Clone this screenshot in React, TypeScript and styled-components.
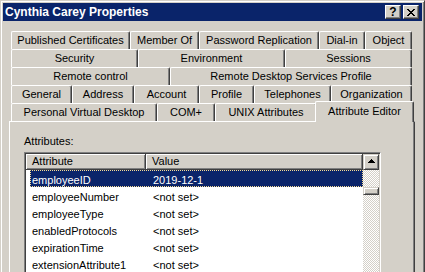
import React from 'react';
import styled, { createGlobalStyle, css } from 'styled-components';

const tabRows: { label: string; w: number; active?: boolean }[][] = [
  [
    { label: 'Published Certificates', w: 119 },
    { label: 'Member Of', w: 69 },
    { label: 'Password Replication', w: 120 },
    { label: 'Dial-in', w: 46 },
    { label: 'Object', w: 47 },
  ],
  [
    { label: 'Security', w: 127 },
    { label: 'Environment', w: 147 },
    { label: 'Sessions', w: 127 },
  ],
  [
    { label: 'Remote control', w: 159 },
    { label: 'Remote Desktop Services Profile', w: 242 },
  ],
  [
    { label: 'General', w: 61 },
    { label: 'Address', w: 62 },
    { label: 'Account', w: 65 },
    { label: 'Profile', w: 55 },
    { label: 'Telephones', w: 77 },
    { label: 'Organization', w: 81 },
  ],
  [
    { label: 'Personal Virtual Desktop', w: 146 },
    { label: 'COM+', w: 58 },
    { label: 'UNIX Attributes', w: 102 },
    { label: 'Attribute Editor', w: 95, active: true },
  ],
];

const attributes = [
  { name: 'employeeID', value: '2019-12-1', selected: true },
  { name: 'employeeNumber', value: '<not set>' },
  { name: 'employeeType', value: '<not set>' },
  { name: 'enabledProtocols', value: '<not set>' },
  { name: 'expirationTime', value: '<not set>' },
  { name: 'extensionAttribute1', value: '<not set>' },
];

const App = () => {
  return (
    <>
      <GlobalStyle />
      <Window>
        <TitleBar>
          <Title>Cynthia Carey Properties</Title>
          <CaptionButtons>
            <CaptionButton>?</CaptionButton>
            <CaptionButton>
              <svg width="8" height="7" viewBox="0 0 8 7" shapeRendering="crispEdges">
                <path
                  d="M0 0h2v1h1v1h2V1h1V0h2v1H7v1H6v1H5v1h1v1h1v1h1v1H6V6H5V5H3v1H2v1H0V6h1V5h1V4h1V3H2V2H1V1H0z"
                  fill="#000"
                />
              </svg>
            </CaptionButton>
          </CaptionButtons>
        </TitleBar>

        <TabStrip>
          {tabRows.map((row, i) => (
            <TabRow key={i}>
              {row.map((tab) => (
                <Tab key={tab.label} $w={tab.w} $active={tab.active}>
                  {tab.label}
                </Tab>
              ))}
            </TabRow>
          ))}
        </TabStrip>

        <Panel>
          <FieldLabel>Attributes:</FieldLabel>
          <ListFrame>
            <ListBody>
              <HeaderRow>
                <HeaderCell $w={120}>Attribute</HeaderCell>
                <HeaderCell $w={217}>Value</HeaderCell>
              </HeaderRow>
              {attributes.map((a) => (
                <Row key={a.name} $selected={a.selected}>
                  <NameCell>{a.name}</NameCell>
                  <ValueCell>{a.value}</ValueCell>
                </Row>
              ))}
            </ListBody>
            <ScrollBar>
              <ScrollButton>
                <svg width="7" height="4" viewBox="0 0 7 4" shapeRendering="crispEdges">
                  <path d="M3 0h1v1h1v1h1v1h1v1H0V3h1V2h1V1h1z" fill="#000" />
                </svg>
              </ScrollButton>
              <Track $h={17} />
              <Thumb />
              <Track />
            </ScrollBar>
          </ListFrame>
        </Panel>
      </Window>
    </>
  );
};
export default App;

const GlobalStyle = createGlobalStyle`
  html, body {
    margin: 0;
    padding: 0;
    overflow: hidden;
    background: #d4d0c8;
  }

  body {
    font-family: 'Liberation Sans', Arial, sans-serif;
    font-size: 11px;
    color: #000;
  }
`;

const Window = styled.div`
  box-sizing: border-box;
  width: 425px;
  height: 272px;
  overflow: hidden;
  padding: 2px 2px 0 2px;

  background: #d4d0c8;
  border-top: 1px solid #d4d0c8;
  border-left: 1px solid #d4d0c8;
  border-right: 1px solid #404040;
  box-shadow: inset 1px 1px 0 #fff, inset -1px 0 0 #808080;
`;

const TitleBar = styled.div`
  display: flex;
  height: 18px;
  padding: 0 3px 0 2px;

  align-items: center;
  background: #0a246a;
`;

const Title = styled.div`
  color: #fff;
  font-size: 12px;
  font-weight: bold;
  white-space: nowrap;
`;

const CaptionButtons = styled.div`
  display: flex;
  margin-left: auto;
  gap: 2px;
`;

const CaptionButton = styled.div`
  display: flex;
  box-sizing: border-box;
  width: 16px;
  height: 14px;

  align-items: center;
  justify-content: center;
  background: #d4d0c8;
  border: 1px solid;
  border-color: #fff #404040 #404040 #fff;
  box-shadow: inset -1px -1px 0 #808080;

  font-size: 12px;
  font-weight: bold;
  line-height: 12px;
`;

const TabStrip = styled.div`
  display: flex;
  margin: 10px 0 0 8px;

  flex-direction: column;
`;

const TabRow = styled.div`
  display: flex;
  width: 401px;
  height: 18px;

  align-items: flex-start;
`;

const Tab = styled.div<{ $w: number; $active?: boolean }>`
  box-sizing: border-box;
  width: ${(p) => p.$w}px;
  height: 18px;
  padding-top: 2px;
  flex: none;

  background: #d4d0c8;
  border-left: 1px solid #fff;
  border-top: 1px solid #fff;
  border-right: 1px solid #404040;
  border-radius: 2px 2px 0 0;
  box-shadow: inset -1px 0 0 #808080;

  text-align: center;
  line-height: 13px;
  white-space: nowrap;

  ${(p) =>
    p.$active &&
    css`
      position: relative;
      z-index: 1;
      width: ${p.$w + 4}px;
      height: 21px;
      margin: -2px -2px 0;
      padding-top: 3px;
    `}
`;

const Panel = styled.div`
  box-sizing: border-box;
  width: 406px;
  height: 170px;
  margin-left: 6px;
  padding: 13px 0 0 14px;

  background: #d4d0c8;
  border-left: 1px solid #fff;
  border-top: 1px solid #fff;
  border-right: 1px solid #404040;
  box-shadow: inset -1px 0 0 #808080;
`;

const FieldLabel = styled.div`
  margin-bottom: 4px;
  line-height: 13px;
`;

const ListFrame = styled.div`
  display: flex;
  box-sizing: border-box;
  width: 357px;
  height: 150px;
  padding: 1px;

  background: #fff;
  border: 1px solid;
  border-color: #808080 #fff #fff #808080;
  box-shadow: inset 1px 1px 0 #404040, inset -1px -1px 0 #d4d0c8;
`;

const ListBody = styled.div`
  display: flex;
  width: 337px;

  flex-direction: column;
`;

const HeaderRow = styled.div`
  display: flex;
  height: 16px;
`;

const HeaderCell = styled.div<{ $w: number }>`
  box-sizing: border-box;
  width: ${(p) => p.$w}px;
  padding: 1px 0 0 6px;

  background: #d4d0c8;
  border-right: 1px solid #404040;
  border-bottom: 1px solid #404040;
  box-shadow: inset 1px 1px 0 #fff, inset -1px -1px 0 #808080;

  line-height: 13px;
  white-space: nowrap;
`;

const Row = styled.div<{ $selected?: boolean }>`
  display: flex;
  box-sizing: border-box;
  height: 17px;
  margin-left: 4px;
  padding-top: 3px;

  border: 1px solid transparent;
  line-height: 13px;
  white-space: nowrap;

  ${(p) =>
    p.$selected &&
    css`
      background: #0a246a;
      color: #fff;
      border: 1px dotted #f5db95;
    `}
`;

const NameCell = styled.div`
  box-sizing: border-box;
  width: 116px;
  padding-left: 1px;
`;

const ValueCell = styled.div`
  padding-left: 6px;
`;

const ScrollBar = styled.div`
  display: flex;
  width: 16px;

  flex-direction: column;
`;

const raised = css`
  box-sizing: border-box;
  background: #d4d0c8;
  border: 1px solid;
  border-color: #d4d0c8 #404040 #404040 #d4d0c8;
  box-shadow: inset 1px 1px 0 #fff, inset -1px -1px 0 #808080;
`;

const ScrollButton = styled.div`
  ${raised};
  display: flex;
  height: 16px;
  padding-bottom: 2px;

  align-items: center;
  justify-content: center;
`;

const Track = styled.div<{ $h?: number }>`
  ${(p) => (p.$h ? `height: ${p.$h}px;` : 'flex: 1;')}
  background: repeating-conic-gradient(#fff 0 25%, #d4d0c8 0 50%) 0 0 / 2px 2px;
`;

const Thumb = styled.div`
  ${raised};
  height: 8px;
`;
